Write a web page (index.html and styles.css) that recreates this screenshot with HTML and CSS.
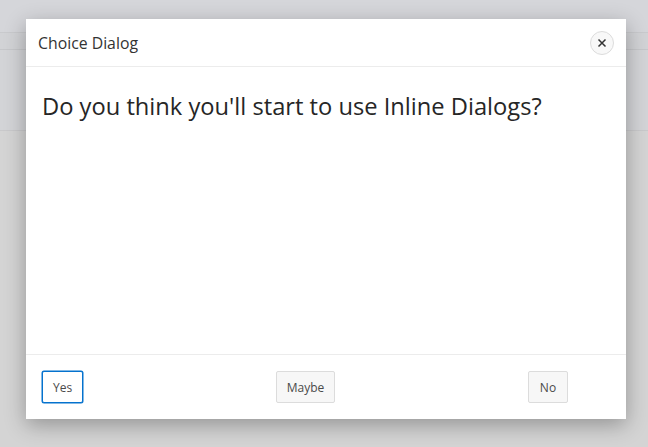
FILE: index.html
```html
<!DOCTYPE html>
<html>

<head>
	<meta charset="utf-8">
	<title>Choice Dialog</title>
	<link rel="stylesheet" href="styles.css">
</head>

<body>
	<div class="page">
		<div class="topbar"></div>
		<div class="navbar"></div>
		<div class="hero"></div>
		<div class="content"></div>
	</div>

	<div class="dialog" role="dialog">
		<div class="dialog_header">
			<span class="dialog_title">Choice Dialog</span>
			<button class="close_btn" title="Close">
				<svg width="10" height="10" viewBox="0 0 10 10">
					<path d="M1.5 1.5 L8.5 8.5 M8.5 1.5 L1.5 8.5" stroke="#333" stroke-width="1.5" fill="none" />
				</svg>
			</button>
		</div>
		<div class="dialog_body">
			<h2>Do you think you'll start to use Inline Dialogs?</h2>
		</div>
		<div class="dialog_footer">
			<button class="btn btn_focus">Yes</button>
			<button class="btn">Maybe</button>
			<button class="btn">No</button>
		</div>
	</div>
</body>

</html>
```

FILE: styles.css
```css
html,
body {
	margin: 0;
	height: 100%;
}

body {
	font-family: "Segoe UI", "Open Sans", sans-serif;
	color: #262626;
	background-color: #d4d4d4;
	overflow: hidden;
}

.page {
	height: 100%;
	display: flex;
	flex-direction: column;
}

.topbar {
	height: 32px;
	background-color: #d5d6da;
	border-bottom: 1px solid #c9cacd;
}

.navbar {
	height: 16px;
	background-color: #d2d3d6;
	border-bottom: 1px solid #c6c7ca;
}

.hero {
	height: 80px;
	background-color: #d3d4d7;
	border-bottom: 1px solid #c9c9cb;
}

.content {
	flex: 1;
	background-color: #d4d4d4;
}

/* the dialog sits over the page */
.dialog {
	position: absolute;
	left: 26px;
	top: 19px;
	width: 600px;
	height: 400px;
	background-color: #ffffff;
	box-shadow: 0 6px 20px rgba(0, 0, 0, 0.3);
	display: flex;
	flex-direction: column;
}

.dialog_header {
	height: 48px;
	box-sizing: border-box;
	border-bottom: 1px solid #ececec;
	display: flex;
	align-items: center;
	justify-content: space-between;
	padding: 0 12px 0 12px;
}

.dialog_title {
	font-size: 15.8px;
	color: #333333;
}

.close_btn {
	width: 24px;
	height: 24px;
	border-radius: 50%;
	border: 1px solid #dcdcdc;
	background-color: #f8f8f8;
	padding: 0;
	display: flex;
	align-items: center;
	justify-content: center;
}

.dialog_body {
	flex: 1;
	padding: 16px;
}

.dialog_body h2 {
	margin: 7px 0 0 0;
	font-size: 23.7px;
	font-weight: 400;
	color: #262626;
}

.dialog_footer {
	height: 65px;
	box-sizing: border-box;
	border-top: 1px solid #ececec;
	display: flex;
	align-items: center;
	justify-content: space-between;
	padding: 0 58px 0 16px;
}

.btn {
	height: 32px;
	min-width: 40px;
	padding: 0 10px;
	font-family: "Segoe UI", "Open Sans", sans-serif;
	font-size: 12px;
	color: #4a4a4a;
	background-color: #f7f7f7;
	border: 1px solid #dcdcdc;
	border-radius: 2px;
}

.btn_focus {
	background-color: #ffffff;
	border-color: #0572ce;
	box-shadow: 0 0 0 0.5px #0572ce;
}
```
